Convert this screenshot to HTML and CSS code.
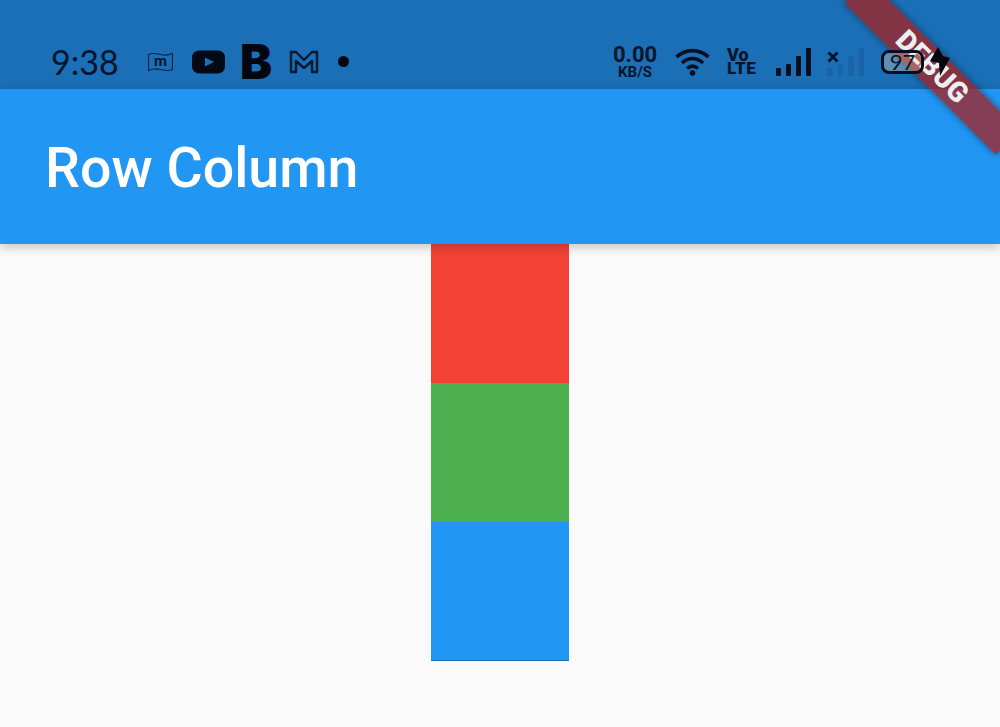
FILE: index.html
```html
<!DOCTYPE html>
<html lang="en">
<head>
    <meta charset="UTF-8">
    <title>Row Column</title>
    <link rel="stylesheet" href="styles.css">
</head>
<body>

    <div class="page">
        <!-- system status bar -->
        <div class="status">
            <div class="status-left">
                <span class="clock">9:38</span>
                <span class="flag">
                    <svg width="25" height="20" viewBox="0 0 25 20"><path d="M.5 2.500C5 .5 8 1.500 12.500 2.500S20 3.500 24.500 1.500V17.500C20 19.500 17 18.500 12.500 17.500S5 16.500 .5 18.500Z" fill="none" stroke="#0b2340" stroke-width="1.200"/></svg>
                    <span class="flag-m">m</span>
                </span>
                <svg class="yt" width="33" height="24" viewBox="0 0 33 24"><rect width="33" height="23" y=".5" rx="7" fill="#020a16"/><path d="M13 7.500 22 12 13 16.500Z" fill="#1f6fb3"/></svg>
                <span class="big-b">B</span>
                <svg class="mail" width="30" height="24" viewBox="0 0 30 24"><path d="M2 22V2H7L15 10 23 2H28V22H23V11L15 18 7 11V22Z" fill="none" stroke="#071a30" stroke-width="2.400" stroke-linejoin="round"/></svg>
                <span class="dot"></span>
            </div>
            <div class="status-right">
                <div class="speed">
                    <span class="speed-num">0.00</span>
                    <span class="speed-unit">KB/S</span>
                </div>
                <svg class="wifi" width="37" height="28" viewBox="0 0 37 28">
                    <path d="M1.500 9C11 .5 24 .5 33.500 9M7 15C13.500 9 21.500 9 28 15M12 20.500C15.500 17.500 19.500 17.500 23 20.500" fill="none" stroke="#050f20" stroke-width="3.600"/>
                    <circle cx="17.500" cy="25" r="2.800" fill="#050f20"/>
                    <path d="M30 21 33 18 36 21M30 24 33 27 36 24" fill="none" stroke="#2f6f9f" stroke-width="1.500"/>
                </svg>
                <div class="volte">
                    <span class="vo">Vo</span>
                    <span class="lte">LTE</span>
                </div>
                <div class="bars">
                    <span class="bar bar-1"></span>
                    <span class="bar bar-2"></span>
                    <span class="bar bar-3"></span>
                    <span class="bar bar-4"></span>
                </div>
                <div class="bars bars-off">
                    <span class="bar bar-1"></span>
                    <span class="bar bar-2"></span>
                    <span class="bar bar-3"></span>
                    <span class="bar bar-4"></span>
                    <svg class="no-signal" width="12" height="12" viewBox="0 0 12 12"><path d="M1.500 1.500 10.500 10.500M10.500 1.500 1.500 10.500" stroke="#06152b" stroke-width="3"/></svg>
                </div>
                <div class="battery">
                    <span class="battery-num">97</span>
                </div>
                <svg class="bolt" width="20" height="30" viewBox="0 0 20 30"><path d="M8 0 13 9 20 11 10 29 9 16 0 14Z" fill="#02060e"/></svg>
            </div>
        </div>

        <header class="appbar">
            <h1 class="title">Row Column</h1>
        </header>

        <main class="content">
            <div class="box box-red"></div>
            <div class="box box-green"></div>
            <div class="box box-blue"></div>
        </main>

        <div class="banner"><span class="banner-text">DEBUG</span></div>
    </div>

</body>
</html>
```

FILE: styles.css
```css
html,body,div,h1,span{margin: 0; padding: 0;}
body{background: #fafafa; font-family: Roboto, "Liberation Sans", sans-serif;}

.page {
    position: relative;
    width: 1000px;
    height: 727px;
    overflow: hidden;
}

/* status bar */
.status {
    height: 89px;
    background: #1a6fb6;
    display: flex;
    justify-content: space-between;
    align-items: center;
    padding: 34px 50px 0 51px;
    box-sizing: border-box;
    color: #06152b;
}
.status-left, .status-right {
    display: flex;
    align-items: center;
    position: relative;
    z-index: 5;
}

.clock {
    font-family: Lato, sans-serif;
    font-weight: 400;
    font-size: 34px;
    line-height: 40px;
    width: 97px;
}
.flag {
    position: relative;
    width: 25px;
    height: 20px;
    margin-right: 19px;
    display: flex;
}
.flag-m {
    position: absolute;
    left: 0;
    right: 0;
    top: 0;
    text-align: center;
    font-size: 15px;
    line-height: 18px;
    font-weight: 700;
}
.yt{margin-right: 15px;}
.big-b {
    font-family: Inter, Roboto, sans-serif;
    font-weight: 900;
    font-size: 48px;
    line-height: 38px;
    width: 33px;
    margin-right: 16px;
    color: #02060e;
}
.mail{margin-right: 19px;}
.dot {
    width: 11px;
    height: 11px;
    border-radius: 50%;
    background: #02060e;
}

.speed {
    display: flex;
    flex-direction: column;
    align-items: center;
    width: 44px;
    margin-right: 18px;
    font-weight: 700;
}
.speed-num{font-size: 22px; line-height: 20px;}
.speed-unit{font-size: 15px; line-height: 14px;}
.wifi{margin-right: 15px;}

.volte {
    display: flex;
    flex-direction: column;
    width: 33px;
    margin-right: 16px;
    font-weight: 900;
}
.vo{font-size: 18px; line-height: 14px;}
.lte{font-size: 17px; line-height: 13px; letter-spacing: .5px;}

.bars {
    position: relative;
    display: flex;
    align-items: flex-end;
    gap: 5px;
    width: 35px;
    height: 28px;
    margin-right: 16px;
}
.bar{flex: 1; background: #050f20; border-radius: 1px;}
.bar-1{height: 8px;}
.bar-2{height: 12px;}
.bar-3{height: 20px;}
.bar-4{height: 28px;}
.bars-off{width: 37px; margin-right: 17px;}
.bars-off .bar{background: #1a64a6;}
.no-signal {
    position: absolute;
    left: 0;
    top: 3px;
}

.battery {
    width: 43px;
    height: 24px;
    border: 3px solid #050f20;
    border-radius: 8px;
    box-sizing: border-box;
    background: rgba(255, 220, 180, .3);
    margin-right: 6px;
    text-align: center;
    font-family: Lato, sans-serif;
    font-size: 22px;
    line-height: 18px;
}

/* app bar */
.appbar {
    position: relative;
    z-index: 2;
    height: 155px;
    background: #2196f3;
    display: flex;
    align-items: center;
    padding-left: 45px;
    box-shadow: 0 3px 10px rgba(0, 0, 0, .22);
}
.title {
    font-size: 55.5px;
    line-height: 60px;
    margin-top: 5px;
    font-weight: 500;
    color: #fff;
}

.content {
    display: flex;
    flex-direction: column;
    align-items: center;
}
.box{width: 138px; height: 139px;}
.box-red{background: #f44336;}
.box-green{background: #4caf50;}
.box-blue{background: #2196f3; border-bottom: 1px solid #1a6fb6; box-sizing: border-box;}

/* debug ribbon over the corner */
.banner {
    position: absolute;
    z-index: 3;
    left: 825px;
    top: 50px;
    width: 214px;
    height: 34px;
    background: rgba(175, 25, 20, .7);
    box-shadow: 0 0 6px rgba(0, 0, 0, .5);
    transform: rotate(45deg);
    text-align: center;
}
.banner-text {
    font-size: 28px;
    line-height: 34px;
    font-weight: 900;
    color: #eee;
}
```
